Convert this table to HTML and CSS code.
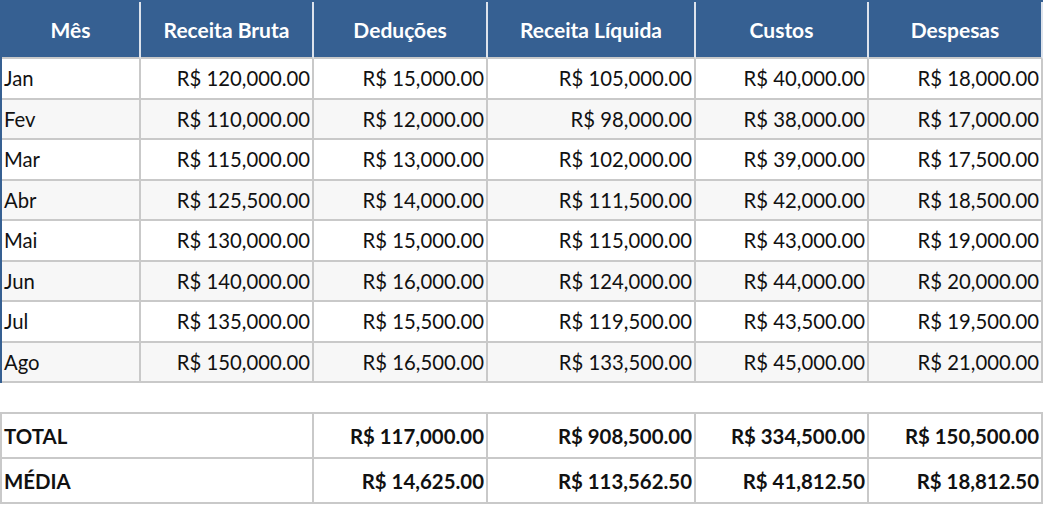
FILE: index.html
```html
<!DOCTYPE html>
<html lang="pt">
<head>
<meta charset="utf-8">
<title>Resumo Financeiro</title>
<link rel="stylesheet" href="styles.css">
</head>
<body>
<table class="grid main">
  <colgroup>
    <col class="c1"><col class="c2"><col class="c3"><col class="c4"><col class="c5"><col class="c6">
  </colgroup>
  <thead>
    <tr>
      <th>Mês</th><th>Receita Bruta</th><th>Deduções</th><th>Receita Líquida</th><th>Custos</th><th>Despesas</th>
    </tr>
  </thead>
  <tbody>
    <tr><td class="m">Jan</td><td>R$ 120,000.00</td><td>R$ 15,000.00</td><td>R$ 105,000.00</td><td>R$ 40,000.00</td><td>R$ 18,000.00</td></tr>
    <tr><td class="m">Fev</td><td>R$ 110,000.00</td><td>R$ 12,000.00</td><td>R$ 98,000.00</td><td>R$ 38,000.00</td><td>R$ 17,000.00</td></tr>
    <tr><td class="m">Mar</td><td>R$ 115,000.00</td><td>R$ 13,000.00</td><td>R$ 102,000.00</td><td>R$ 39,000.00</td><td>R$ 17,500.00</td></tr>
    <tr><td class="m">Abr</td><td>R$ 125,500.00</td><td>R$ 14,000.00</td><td>R$ 111,500.00</td><td>R$ 42,000.00</td><td>R$ 18,500.00</td></tr>
    <tr><td class="m">Mai</td><td>R$ 130,000.00</td><td>R$ 15,000.00</td><td>R$ 115,000.00</td><td>R$ 43,000.00</td><td>R$ 19,000.00</td></tr>
    <tr><td class="m">Jun</td><td>R$ 140,000.00</td><td>R$ 16,000.00</td><td>R$ 124,000.00</td><td>R$ 44,000.00</td><td>R$ 20,000.00</td></tr>
    <tr><td class="m">Jul</td><td>R$ 135,000.00</td><td>R$ 15,500.00</td><td>R$ 119,500.00</td><td>R$ 43,500.00</td><td>R$ 19,500.00</td></tr>
    <tr><td class="m">Ago</td><td>R$ 150,000.00</td><td>R$ 16,500.00</td><td>R$ 133,500.00</td><td>R$ 45,000.00</td><td>R$ 21,000.00</td></tr>
  </tbody>
</table>

<table class="grid totals">
  <colgroup>
    <col class="c1"><col class="c2"><col class="c3"><col class="c4"><col class="c5"><col class="c6">
  </colgroup>
  <tbody>
    <tr><td class="m" colspan="2">TOTAL</td><td>R$ 117,000.00</td><td>R$ 908,500.00</td><td>R$ 334,500.00</td><td>R$ 150,500.00</td></tr>
    <tr><td class="m" colspan="2">MÉDIA</td><td>R$ 14,625.00</td><td>R$ 113,562.50</td><td>R$ 41,812.50</td><td>R$ 18,812.50</td></tr>
  </tbody>
</table>
</body>
</html>
```

FILE: styles.css
```css
html, body {
  margin: 0;
  padding: 0;
  background: #ffffff;
}

body {
  font-family: Lato, "Liberation Sans", sans-serif;
  font-size: 20.3px;
  color: #111111;
}

.grid {
  border-collapse: separate;
  border-spacing: 0;
  table-layout: fixed;
  width: 1043px;
  border-left: 2px solid #c9c9c9;
  border-top: 2px solid #c9c9c9;
}

.grid col.c1 { width: 139px; }
.grid col.c2 { width: 173px; }
.grid col.c3 { width: 174px; }
.grid col.c4 { width: 208px; }
.grid col.c5 { width: 173px; }
.grid col.c6 { width: 174px; }

.grid td,
.grid th {
  box-sizing: border-box;
  border-right: 2px solid #c9c9c9;
  border-bottom: 2px solid #c9c9c9;
  padding: 0 2px 0 2px;
  white-space: nowrap;
  overflow: hidden;
}

.main {
  border-top-color: #366092;
  border-left-color: #366092;
}

.main th {
  background: #366092;
  color: #ffffff;
  font-weight: 700;
  font-size: 21px;
  text-align: center;
  height: 57px;
  border-right-color: #dde3ec;
  border-bottom-color: #c9c9c9;
}

.main td {
  height: 40.5px;
  text-align: right;
}

.main tbody tr:nth-child(even) td {
  background: #f7f7f7;
}

.grid td.m {
  text-align: left;
}

.totals {
  margin-top: 29px;
}

.totals td {
  height: 45px;
  font-weight: 700;
  font-size: 20.4px;
  text-align: right;
}
```
